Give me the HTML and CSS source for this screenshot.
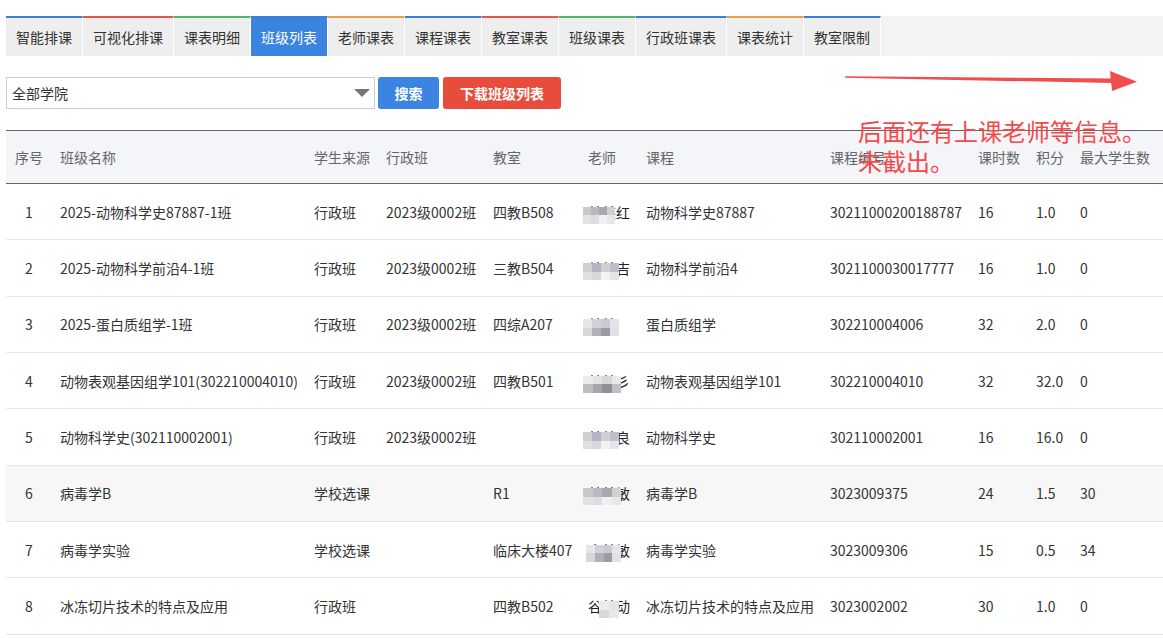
FILE: index.html
```html
<!DOCTYPE html>
<html lang="zh-CN">
<head>
<meta charset="utf-8">
<title>班级列表</title>
<link rel="stylesheet" href="styles.css">
</head>
<body>
<div class="page">
  <ul class="tabs">
    <li class="tab c-blue">智能排课</li>
    <li class="tab c-red">可视化排课</li>
    <li class="tab c-green">课表明细</li>
    <li class="tab c-blue active">班级列表</li>
    <li class="tab c-orange">老师课表</li>
    <li class="tab c-blue">课程课表</li>
    <li class="tab c-red">教室课表</li>
    <li class="tab c-green">班级课表</li>
    <li class="tab c-blue">行政班课表</li>
    <li class="tab c-orange">课表统计</li>
    <li class="tab c-blue">教室限制</li>
  </ul>

  <div class="toolbar">
    <div class="select"><span>全部学院</span><i class="caret"></i></div>
    <button class="btn btn-blue">搜索</button>
    <button class="btn btn-red">下载班级列表</button>
  </div>

  <table class="grid">
    <colgroup>
      <col class="w-no"><col class="w-name"><col class="w-src"><col class="w-adm"><col class="w-room">
      <col class="w-tea"><col class="w-course"><col class="w-code"><col class="w-hrs"><col class="w-pts"><col class="w-max">
    </colgroup>
    <thead>
      <tr>
        <th class="center">序号</th><th>班级名称</th><th>学生来源</th><th>行政班</th><th>教室</th>
        <th>老师</th><th>课程</th><th>课程编号</th><th>课时数</th><th>积分</th><th>最大学生数</th>
      </tr>
    </thead>
    <tbody>
      <tr>
        <td class="center">1</td><td>2025-动物科学史87887-1班</td><td>行政班</td><td>2023级0002班</td><td>四教B508</td>
        <td><span class="tname">某某红<span class="mos pa"><i></i><i></i><i></i><i></i><i></i><i></i><i></i><i></i></span></span></td>
        <td>动物科学史87887</td><td>30211000200188787</td><td>16</td><td>1.0</td><td>0</td>
      </tr>
      <tr>
        <td class="center">2</td><td>2025-动物科学前沿4-1班</td><td>行政班</td><td>2023级0002班</td><td>三教B504</td>
        <td><span class="tname">某某吉<span class="mos pb wide"><i></i><i></i><i></i><i></i><i></i><i></i><i></i><i></i></span></span></td>
        <td>动物科学前沿4</td><td>3021100030017777</td><td>16</td><td>1.0</td><td>0</td>
      </tr>
      <tr>
        <td class="center">3</td><td>2025-蛋白质组学-1班</td><td>行政班</td><td>2023级0002班</td><td>四综A207</td>
        <td><span class="tname">某某<span class="mos pc wide"><i></i><i></i><i></i><i></i><i></i><i></i><i></i><i></i></span></span></td>
        <td>蛋白质组学</td><td>302210004006</td><td>32</td><td>2.0</td><td>0</td>
      </tr>
      <tr>
        <td class="center">4</td><td>动物表观基因组学101(302210004010)</td><td>行政班</td><td>2023级0002班</td><td>四教B501</td>
        <td><span class="tname">某某彡<span class="mos pd wider"><i></i><i></i><i></i><i></i><i></i><i></i><i></i><i></i></span></span></td>
        <td>动物表观基因组学101</td><td>302210004010</td><td>32</td><td>32.0</td><td>0</td>
      </tr>
      <tr>
        <td class="center">5</td><td>动物科学史(302110002001)</td><td>行政班</td><td>2023级0002班</td><td></td>
        <td><span class="tname">某某良<span class="mos pb wide"><i></i><i></i><i></i><i></i><i></i><i></i><i></i><i></i></span></span></td>
        <td>动物科学史</td><td>302110002001</td><td>16</td><td>16.0</td><td>0</td>
      </tr>
      <tr class="hover">
        <td class="center">6</td><td>病毒学B</td><td>学校选课</td><td></td><td>R1</td>
        <td><span class="tname">某某敏<span class="mos pa wider"><i></i><i></i><i></i><i></i><i></i><i></i><i></i><i></i></span></span></td>
        <td>病毒学B</td><td>3023009375</td><td>24</td><td>1.5</td><td>30</td>
      </tr>
      <tr>
        <td class="center">7</td><td>病毒学实验</td><td>学校选课</td><td></td><td>临床大楼407</td>
        <td><span class="tname">丰某敏<span class="mos pc shifted"><i></i><i></i><i></i><i></i><i></i><i></i><i></i><i></i></span></span></td>
        <td>病毒学实验</td><td>3023009306</td><td>15</td><td>0.5</td><td>34</td>
      </tr>
      <tr>
        <td class="center">8</td><td>冰冻切片技术的特点及应用</td><td>行政班</td><td></td><td>四教B502</td>
        <td><span class="tname">谷某动<span class="mos pd mid"><i></i><i></i><i></i><i></i><i></i><i></i><i></i><i></i></span></span></td>
        <td>冰冻切片技术的特点及应用</td><td>3023002002</td><td>30</td><td>1.0</td><td>0</td>
      </tr>
    </tbody>
  </table>
</div>

<svg class="arrow" width="310" height="36" viewBox="0 0 310 36">
  <polygon points="5,11.2 5,12.8 273,18 273,13.6" fill="#f04e4e"/>
  <polygon points="270,6 297,16.7 272,26" fill="#f04e4e"/>
</svg>
<div class="note">后面还有上课老师等信息。<br>未截出。</div>
</body>
</html>
```

FILE: styles.css
```css
* { box-sizing: border-box; }

html, body {
  margin: 0;
  padding: 0;
  background: #fff;
}

body {
  font-family: "Noto Sans CJK SC", "Noto Sans", "Liberation Sans", sans-serif;
  font-size: 14px;
  color: #333;
}

.page {
  padding: 16px 0 0 6px;
}

/* Tabs */
.tabs {
  list-style: none;
  margin: 0;
  padding: 0;
  display: flex;
  background: #f3f3f3;
  height: 40px;
}

.tab {
  height: 40px;
  padding: 0 10px;
  line-height: 38px;
  background: #eeeeee;
  border-top: 2px solid #3c7fd6;
  border-right: 1px solid #fff;
  color: #333;
  white-space: nowrap;
}

.tab.c-blue { border-top-color: #3a7ed8; }
.tab.c-red { border-top-color: #e0574d; }
.tab.c-green { border-top-color: #4db768; }
.tab.c-orange { border-top-color: #eba04a; }

.tab.active {
  background: #3a84e0;
  color: #fff;
}

/* Toolbar */
.toolbar {
  display: flex;
  align-items: stretch;
  margin-top: 21px;
  height: 32px;
}

.select {
  width: 369px;
  border: 1px solid #cccccc;
  display: flex;
  align-items: center;
  justify-content: space-between;
  padding: 0 4px 0 5px;
  color: #333;
}

.caret {
  width: 0;
  height: 0;
  border-left: 8px solid transparent;
  border-right: 8px solid transparent;
  border-top: 8px solid #777;
  margin-right: 0;
}

.btn {
  border: none;
  border-radius: 3px;
  color: #fff;
  font-family: inherit;
  font-size: 14px;
  font-weight: 700;
  padding: 0 16px;
  cursor: pointer;
}

.btn-blue {
  background: #3b84e1;
  margin-left: 3px;
  width: 61px;
}

.btn-red {
  background: #e84c3d;
  margin-left: 4px;
  width: 118px;
}

/* Table */
.grid {
  margin-top: 21px;
  width: 1157px;
  border-collapse: collapse;
  table-layout: fixed;
}

.w-no { width: 46px; }
.w-name { width: 254px; }
.w-src { width: 72px; }
.w-adm { width: 107px; }
.w-room { width: 95px; }
.w-tea { width: 58px; }
.w-course { width: 184px; }
.w-code { width: 148px; }
.w-hrs { width: 58px; }
.w-pts { width: 44px; }
.w-max { width: 91px; }

.grid th {
  height: 53px;
  background: #f4f5f9;
  border-top: 1px solid #666;
  border-bottom: 1px solid #666;
  color: #666;
  font-weight: normal;
  text-align: left;
  padding: 0 8px;
  white-space: nowrap;
}

.grid td {
  height: 56.35px;
  border-bottom: 1px solid #e6e6e6;
  padding: 0 8px;
  white-space: nowrap;
  overflow: hidden;
  color: #333;
}

.grid .center { text-align: center; padding: 0; }

.grid tr.hover td { background: #f7f7f7; }

/* Blurred teacher names */
.tname {
  position: relative;
  display: inline-block;
  line-height: 20px;
  color: #222;
}

.mos {
  position: absolute;
  left: -5px;
  top: 5px;
  width: 32px;
  height: 17px;
  display: grid;
  grid-template-columns: repeat(4, 1fr);
  grid-template-rows: repeat(2, 1fr);
}

.mos.wide { width: 36px; }
.mos.wider { width: 38px; }
.mos.shifted { left: -2px; width: 35px; }
.mos.mid { left: 11px; width: 20px; grid-template-columns: repeat(2, 1fr); }
.mos.mid i:nth-child(n+5) { display: none; }

.mos i { display: block; }

.pa i:nth-child(1) { background: #c6c8cc; }
.pa i:nth-child(2) { background: #b9b9c0; }
.pa i:nth-child(3) { background: #aaa7b1; }
.pa i:nth-child(4) { background: #d0d1d5; }
.pa i:nth-child(5) { background: #e2e2e6; }
.pa i:nth-child(6) { background: #dcdce1; }
.pa i:nth-child(7) { background: #f0f0f2; }
.pa i:nth-child(8) { background: #e6e6ea; }

.pb i:nth-child(1) { background: #cfcfd3; }
.pb i:nth-child(2) { background: #b3b6c2; }
.pb i:nth-child(3) { background: #cfcfd4; }
.pb i:nth-child(4) { background: #c2bec8; }
.pb i:nth-child(5) { background: #e0e0e3; }
.pb i:nth-child(6) { background: #d6d7dc; }
.pb i:nth-child(7) { background: #f2f2f3; }
.pb i:nth-child(8) { background: #e4e4e8; }

.pc i:nth-child(1) { background: #e6e6e8; }
.pc i:nth-child(2) { background: #cfd2d8; }
.pc i:nth-child(3) { background: #c9cbcf; }
.pc i:nth-child(4) { background: #e2e6ea; }
.pc i:nth-child(5) { background: #d8d6dc; }
.pc i:nth-child(6) { background: #b3aebb; }
.pc i:nth-child(7) { background: #9d9aa5; }
.pc i:nth-child(8) { background: #dfe3e7; }

.pd i:nth-child(1) { background: #ecebee; }
.pd i:nth-child(2) { background: #e3e3e7; }
.pd i:nth-child(3) { background: #d8d8dc; }
.pd i:nth-child(4) { background: #e9e9ec; }
.pd i:nth-child(5) { background: #c3bac5; }
.pd i:nth-child(6) { background: #a5a7ac; }
.pd i:nth-child(7) { background: #8f9196; }
.pd i:nth-child(8) { background: #bfc0c6; }

/* Annotation overlay */
.arrow {
  position: absolute;
  left: 840px;
  top: 65px;
}

.note {
  position: absolute;
  left: 858px;
  top: 116px;
  font-size: 24px;
  line-height: 30px;
  color: #f4494b;
  white-space: nowrap;
}
```
